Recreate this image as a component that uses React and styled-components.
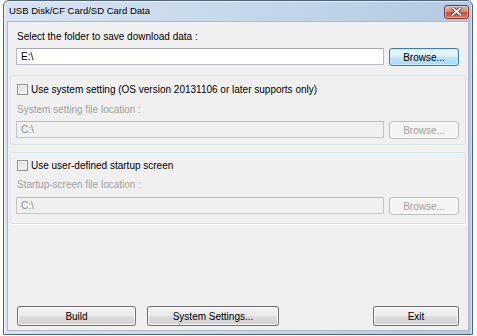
import React from "react";
import styled, { createGlobalStyle } from "styled-components";

const Global = createGlobalStyle`
  html, body { margin: 0; padding: 0; background: #ffffff; }
  body { font-family: "Liberation Sans", Arial, sans-serif; font-size: 10px; color: #000; }
  * { box-sizing: border-box; }
`;

const Window = styled.div`
  margin-left: 3px;
  width: 470px;
  height: 335px;
  border: 1px solid #4f6276;
  border-radius: 6px 6px 0 0;
  background: linear-gradient(to right, #d7e3f0 0%, #c6d8ea 50%, #b3cae2 100%);
  display: flex;
  flex-direction: column;
  padding: 0 3px 3px 3px;
  box-shadow: inset 1px 1px 0 rgba(255,255,255,0.6), inset -1px 0 0 rgba(255,255,255,0.4);
`;

const TitleBar = styled.div`
  height: 20px;
  display: flex;
  align-items: center;
  justify-content: space-between;
  padding-left: 2px;
`;

const Title = styled.span`
  font-size: 9.5px;
  color: #000;
  line-height: 12px;
`;

const CloseButton = styled.div`
  width: 25px;
  height: 14px;
  margin-top: 1px;
  border: 1px solid #7b3a33;
  border-radius: 3px;
  background: linear-gradient(to bottom, #eab0a6 0%, #d98d7f 45%, #c7503d 55%, #d6745f 100%);
  box-shadow: inset 0 0 0 1px rgba(255,220,210,0.5);
  display: flex;
  align-items: center;
  justify-content: center;
`;

const Client = styled.div`
  flex: 1;
  background: #f0f0f0;
  border: 1px solid #a7bace;
  display: flex;
  flex-direction: column;
`;

const TopSection = styled.div`
  padding: 8px 9px 0 8px;
  display: flex;
  flex-direction: column;
`;

const Label = styled.div`
  line-height: 14px;
  height: 14px;
  margin-left: ${p => p.$indent || 1}px;
  margin-top: ${p => p.$mt || 0}px;
  color: ${p => (p.$disabled ? "#a0a0a0" : "#000")};
  white-space: nowrap;
`;

const Row = styled.div`
  display: flex;
  align-items: flex-start;
  gap: 5px;
  margin-top: ${p => p.$mt || 0}px;
`;

const TextBox = styled.div`
  flex: 1;
  height: 17px;
  line-height: 15px;
  padding-left: 4px;
  background: ${p => (p.$disabled ? "#f0f0f0" : "#ffffff")};
  color: ${p => (p.$disabled ? "#8d8d8d" : "#000")};
  border: 1px solid ${p => (p.$disabled ? "#c4c4c4" : "#b8bbc1")};
  border-top-color: ${p => (p.$disabled ? "#bcbcbc" : "#a5a8ae")};
  border-radius: 1px;
`;

const Button = styled.div`
  width: ${p => p.$w}px;
  height: ${p => p.$h || 18}px;
  display: flex;
  align-items: center;
  justify-content: center;
  border-radius: 3px;
  border: 1px solid #707070;
  background: linear-gradient(to bottom, #f2f2f2 0%, #ebebeb 50%, #dddddd 51%, #cfcfcf 100%);
  box-shadow: inset 0 0 0 1px #fbfbfb;
  color: #000;
  margin-left: ${p => (p.$push ? "auto" : "0")};

  &[data-variant="default"] {
    border-color: #3c7fb1;
    background: linear-gradient(to bottom, #eaf6fd 0%, #d9f0fc 50%, #bee6fd 51%, #a7d9f5 100%);
    box-shadow: inset 0 0 0 1px #c8ecfc;
  }
  &[data-variant="disabled"] {
    border-color: #bcbcbc;
    background: #f4f4f4;
    box-shadow: inset 0 0 0 1px #fcfcfc;
    color: #a0a0a0;
  }
`;

const Group = styled.div`
  margin: ${p => p.$mt}px 2px 0 2px;
  border: 1px solid #d5dfe5;
  border-radius: 3px;
  box-shadow: inset 1px 1px 0 #fbfbfb, 1px 1px 0 #fbfbfb;
  padding: ${p => p.$pt}px 6px ${p => p.$pb}px 5px;
  display: flex;
  flex-direction: column;
`;

const CheckRow = styled.label`
  display: flex;
  align-items: center;
  gap: 3px;
  height: 14px;
  margin-left: 1px;
  white-space: nowrap;
`;

const CheckBox = styled.span`
  width: 11px;
  height: 11px;
  border: 1px solid #8e8f8f;
  background: linear-gradient(135deg, #dcdcdc 0%, #f4f4f4 100%);
  box-shadow: inset 0 0 0 1px #f6f6f6;
`;

const Spacer = styled.div`
  flex: 1;
`;

const ButtonBar = styled.div`
  display: flex;
  align-items: center;
  gap: 11px;
  padding: 0 9px 4px 9px;
`;

function CloseGlyph() {
  return (
    <svg width="11" height="9" viewBox="0 0 11 9">
      <path d="M1.5 1 L9.5 8 M9.5 1 L1.5 8" stroke="#6a2a22" strokeWidth="3.4" strokeLinecap="square" />
      <path d="M1.5 1 L9.5 8 M9.5 1 L1.5 8" stroke="#ffffff" strokeWidth="1.8" strokeLinecap="square" />
    </svg>
  );
}

export default function App() {
  return (
    <>
      <Global />
      <Window>
        <TitleBar>
          <Title>USB Disk/CF Card/SD Card Data</Title>
          <CloseButton>
            <CloseGlyph />
          </CloseButton>
        </TitleBar>
        <Client>
          <TopSection>
            <Label>Select the folder to save download data :</Label>
            <Row $mt={4}>
              <TextBox>E:\</TextBox>
              <Button $w={70} data-variant="default">Browse...</Button>
            </Row>
          </TopSection>

          <Group $mt={9} $pt={6} $pb={5}>
            <CheckRow>
              <CheckBox />
              <span>Use system setting (OS version 20131106 or later supports only)</span>
            </CheckRow>
            <Label $disabled $mt={7}>System setting file location :</Label>
            <Row $mt={4}>
              <TextBox $disabled>C:\</TextBox>
              <Button $w={70} data-variant="disabled">Browse...</Button>
            </Row>
          </Group>

          <Group $mt={7} $pt={5} $pb={8}>
            <CheckRow>
              <CheckBox />
              <span>Use user-defined startup screen</span>
            </CheckRow>
            <Label $disabled $mt={6}>Startup-screen file location :</Label>
            <Row $mt={5}>
              <TextBox $disabled>C:\</TextBox>
              <Button $w={70} data-variant="disabled">Browse...</Button>
            </Row>
          </Group>

          <Spacer />

          <ButtonBar>
            <Button $w={119} $h={20}>Build</Button>
            <Button $w={132} $h={20}>System Settings...</Button>
            <Button $w={86} $h={20} $push>Exit</Button>
          </ButtonBar>
        </Client>
      </Window>
    </>
  );
}
